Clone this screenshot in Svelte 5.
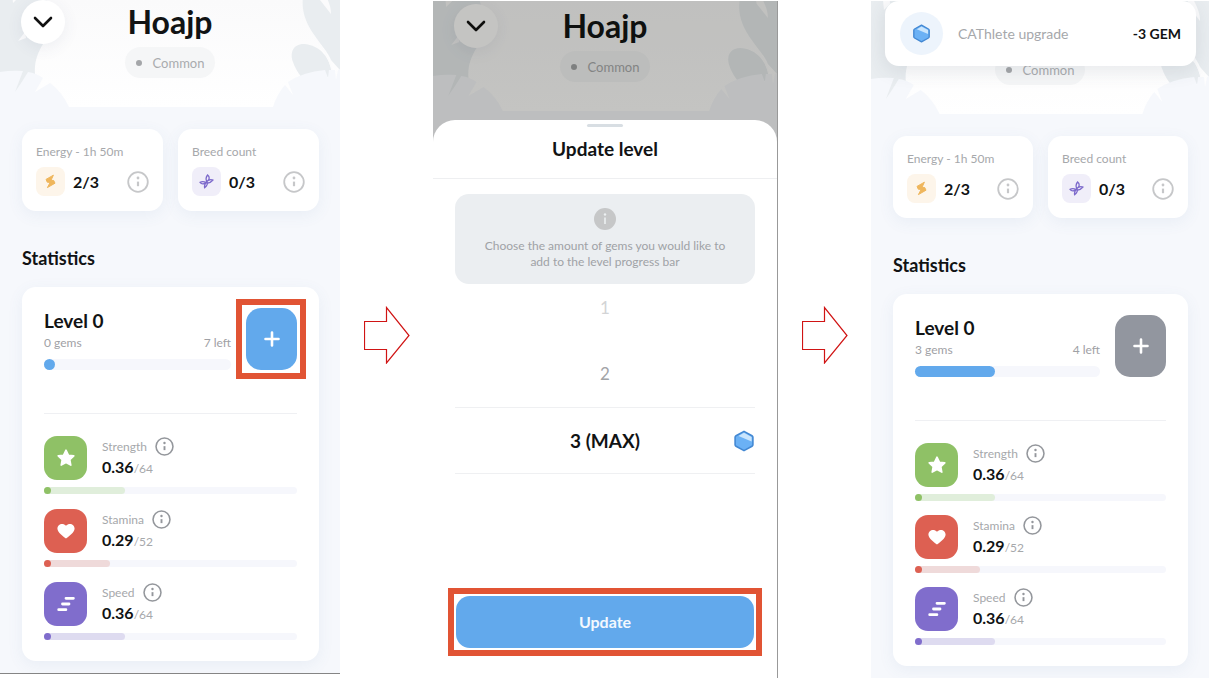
<script lang="ts">
  type Stat = {
    id: string;
    label: string;
    value: string;
    max: string;
    progress: number;
  };

  type Level = {
    gems: number;
    left: number;
    progress: number;
    disabled?: boolean;
    highlight?: boolean;
  };

  const stats: Stat[] = [
    { id: 'strength', label: 'Strength', value: '0.36', max: '64', progress: 32 },
    { id: 'stamina', label: 'Stamina', value: '0.29', max: '52', progress: 26 },
    { id: 'speed', label: 'Speed', value: '0.36', max: '64', progress: 32 },
  ];

  const before: Level = { gems: 0, left: 7, progress: 0, highlight: true };
  const after: Level = { gems: 3, left: 4, progress: 43, disabled: true };

  const amounts = [
    { value: 1, label: '1' },
    { value: 2, label: '2' },
    { value: 3, label: '3 (MAX)' },
  ];

  let amount = $state(3);
</script>

{#snippet infoIcon()}
  <svg class="icon" viewBox="0 0 22 22" aria-hidden="true">
    <circle cx="11" cy="11" r="9.8" fill="none" stroke="currentColor" stroke-width="1.8" />
    <circle cx="11" cy="7" r="1.4" fill="currentColor" />
    <path d="M11 10.6v4.6" stroke="currentColor" stroke-width="2.2" />
  </svg>
{/snippet}

{#snippet gem()}
  <svg class="icon" viewBox="0 0 22 22" aria-hidden="true">
    <path
      d="M11 1.4l8 4.4q.9.5.9 1.5v7.4q0 1-.9 1.5l-8 4.4-8-4.4q-.9-.5-.9-1.5V7.3q0-1 .9-1.5z"
      fill="#6bb1f5"
      stroke="#4388d3"
      stroke-width="1.6"
      stroke-linejoin="round"
    />
    <path d="M5.500 6l5.500-3.200L18.600 7v4.600z" fill="#c9e5fd" />
  </svg>
{/snippet}

{#snippet arrow()}
  <svg class="arrow" viewBox="0 0 46 58" aria-hidden="true">
    <path d="M.5 15.500h22V1.500L45 29.500 22.500 57V43.500H.5z" fill="#fff" stroke="#d01414" stroke-width="1.2" />
  </svg>
{/snippet}

{#snippet hero(covered: boolean)}
  <header class="hero">
    <svg class="hero__art" viewBox="0 -8 340 115" preserveAspectRatio="none" aria-hidden="true">
      <path d="M0-8h44C52 8 51 28 43 44c-5 8-9 18-8 30l-6 20H0z" fill="#e9edf0" />
      <path d="M12-8l1 11 6-6v-5zM25 32l-7 9 8-3z" fill="#fbfbfc" />
      <path d="M304-8c-4 16 1 30 11 44 6 9 13 16 16 24l9 10V-8z" fill="#e9edf0" />
      <path d="M318-8l2 8 11 14c0-8-3-14-7-22z" fill="#fbfbfc" />
      <path d="M332 76c-1-18-12-31-28-32-12 0-14 10-11 18 3 9 8 14 12 20z" fill="#e9edf0" />
      <path d="M313 36c8 10 15 19 21 41-3-15-7-27-21-41z" fill="#fbfbfc" />
      <path
        d="M0 72q12-2 23-1L15 92q7-10 13-20 8 1 15 6l-8 14 15-9q12 9 19 24H0z"
        fill="#f6f8fc"
      />
      <path
        d="M273 107q4-13 12-22l8 10-5-13q15-10 37-12l3 8 1-8h6l1 10 2-10 2-1v38z"
        fill="#f6f8fc"
      />
    </svg>
    {#if !covered}
      <div class="hero__bar">
        <button type="button" class="hero__back" aria-label="Close">
          <svg class="icon" viewBox="0 0 20 12" aria-hidden="true">
            <path
              d="M2 2l8 8 8-8"
              fill="none"
              stroke="#111"
              stroke-width="2.600"
              stroke-linecap="round"
              stroke-linejoin="round"
            />
          </svg>
        </button>
        <h1>Hoajp</h1>
      </div>
    {/if}
    <div class="chip"><span class="chip__dot"></span>Common</div>
  </header>
{/snippet}

{#snippet profile(level: Level)}
  <div class="profile">
    <div class="tiles">
      <section class="tile">
        <p class="caption">Energy - 1h 50m</p>
        <div class="tile__row">
          <span class="tile__icon tile__icon--energy">
            <svg class="icon" viewBox="0 0 15 15" aria-hidden="true">
              <path
                d="M10.400 1.200L3 5.400l1.300 2.800 2.900.2-2.800 5.200L12 9.200l-1.300-2.700-2.700-.2z"
                fill="#efb65c"
                stroke="#efb65c"
                stroke-linejoin="round"
              />
            </svg>
          </span>
          <strong>2/3</strong>
          <button type="button" class="info" aria-label="About energy">{@render infoIcon()}</button>
        </div>
      </section>
      <section class="tile">
        <p class="caption">Breed count</p>
        <div class="tile__row">
          <span class="tile__icon tile__icon--breed">
            <svg class="icon" viewBox="0 0 15 15" aria-hidden="true">
              <path
                d="M1 8.400c2.600-1.400 4.200-.8 6.200.2s4 .4 6.800-2.600M8.600 1c-1.800 2.400-2 4.400-.8 6.400s.8 4-2.200 6.400M1 8.400c1.600 2 4 1.800 5.600 0s3.600-3.800 7.400-2.400M8.600 1c2.200 1.800 2 4 .2 5.800s-4 3.400-3.200 7"
                fill="none"
                stroke="#7c69cb"
                stroke-width="1.300"
                stroke-linecap="round"
                stroke-linejoin="round"
              />
            </svg>
          </span>
          <strong>0/3</strong>
          <button type="button" class="info" aria-label="About breeding">{@render infoIcon()}</button>
        </div>
      </section>
    </div>

    <h2>Statistics</h2>

    <section class="card">
      <div class="level">
        <div class="level__main">
          <h3>Level 0</h3>
          <div class="level__meta">
            <span>{level.gems} gems</span>
            <span>{level.left} left</span>
          </div>
          <div class="bar bar--level">
            <div class="bar__fill" style="width: {level.progress}%"></div>
          </div>
        </div>
        <div class="level__action">
          <button type="button" class="add" aria-label="Add gems" disabled={level.disabled}>
            <svg class="icon" viewBox="0 0 16 16" aria-hidden="true">
              <path d="M8 1.500v13M1.500 8h13" stroke="#fff" stroke-width="2.600" stroke-linecap="round" />
            </svg>
          </button>
          {#if level.highlight}
            <span class="level__highlight"></span>
          {/if}
        </div>
      </div>

      <ul class="stats">
        {#each stats as stat (stat.id)}
          <li class="stat stat--{stat.id}">
            <div class="stat__row">
              <span class="stat__icon">
                <svg class="icon" viewBox="0 0 20 20" aria-hidden="true">
                  {#if stat.id === 'strength'}
                    <path
                      d="M10 2.200l2.400 5 5.400.7-4 3.800 1 5.400L10 14.500l-4.800 2.600 1-5.400-4-3.800 5.400-.7z"
                      fill="#fff"
                      stroke="#fff"
                      stroke-width="1.600"
                      stroke-linejoin="round"
                    />
                  {:else if stat.id === 'stamina'}
                    <path
                      d="M10 17.600C7.500 15.500 1.400 11.800 1.400 7.600c0-4.600 5.600-6.400 8.600-2.800 3-3.600 8.600-1.800 8.600 2.800 0 4.200-6.100 7.900-8.600 10z"
                      fill="#fff"
                    />
                  {:else}
                    <path
                      d="M10 4.300h7.400M6.500 10H13M2.700 15.700h7.200"
                      stroke="#fff"
                      stroke-width="2.800"
                      stroke-linecap="round"
                    />
                  {/if}
                </svg>
              </span>
              <div>
                <div class="stat__label">
                  {stat.label}
                  <button type="button" class="info info--small" aria-label="About {stat.label}">
                    {@render infoIcon()}
                  </button>
                </div>
                <div class="stat__value"><strong>{stat.value}</strong>/{stat.max}</div>
              </div>
            </div>
            <div class="bar">
              <div class="bar__potential" style="width: {stat.progress}%"></div>
              <div class="bar__fill"></div>
            </div>
          </li>
        {/each}
      </ul>
    </section>
  </div>
{/snippet}

<main class="steps">
  <section class="screen screen--start">
    {@render hero(false)}
    {@render profile(before)}
  </section>

  {@render arrow()}

  <section class="screen screen--picker">
    {@render hero(false)}
    <div class="backdrop"></div>
    <form class="sheet" onsubmit={(event) => event.preventDefault()}>
      <div class="sheet__handle"></div>
      <h2 class="sheet__title">Update level</h2>
      <div class="sheet__body">
        <div class="hint">
          <svg class="icon" viewBox="0 0 22 22" aria-hidden="true">
            <circle cx="11" cy="11" r="11" fill="#c6c7c8" />
            <circle cx="11" cy="6.500" r="1.200" fill="#edf0f2" />
            <path d="M11 9.500v6.500" stroke="#edf0f2" stroke-width="1.600" />
          </svg>
          <p>Choose the amount of gems you would like to add to the level progress bar</p>
        </div>
        <div class="wheel">
          {#each amounts as item (item.value)}
            <label class="wheel__row wheel__row--{item.value}">
              <input type="radio" name="amount" value={item.value} bind:group={amount} />
              <span>{item.label}</span>
              {#if item.value === amount}
                <span class="wheel__gem">{@render gem()}</span>
              {/if}
            </label>
          {/each}
        </div>
      </div>
      <div class="sheet__submit">
        <button type="submit">Update</button>
      </div>
    </form>
  </section>

  {@render arrow()}

  <section class="screen screen--done">
    {@render hero(true)}
    {@render profile(after)}
    <div class="toast" role="status">
      <span class="toast__icon">{@render gem()}</span>
      <span class="toast__text">CAThlete upgrade</span>
      <strong>-3 GEM</strong>
    </div>
  </section>
</main>

<style>
  :global(body) {
    margin: 0;
    background: #fff;
  }

  .steps {
    display: grid;
    grid-template-columns: 340fr 93fr 345fr 93fr 338fr 5fr;
    align-items: start;
    font-family: Lato, 'Open Sans', sans-serif;
    font-size: 13px;
    line-height: 16px;
    color: #111314;
  }

  h1,
  h2,
  h3,
  p,
  ul {
    margin: 0;
    padding: 0;
  }

  button {
    margin: 0;
    padding: 0;
    border: 0;
    background: none;
    font: inherit;
    color: inherit;
    cursor: pointer;
  }

  .icon {
    display: block;
    flex: none;
  }

  .arrow {
    width: 46px;
    align-self: center;
    justify-self: center;
    margin-bottom: 8px;
  }

  .screen {
    position: relative;
    overflow: hidden;
    background: #f6f8fc;
  }

  .screen--start {
    border-bottom: 1px solid #858585;
  }

  .screen--picker,
  .screen--done {
    margin-top: 1px;
  }

  .screen--picker {
    border-right: 1px solid #999;
  }

  /* hero */
  .hero {
    position: relative;
    display: flex;
    flex-direction: column;
    align-items: center;
    padding-bottom: 29px;
    background: linear-gradient(#fafafb, #fff);
  }

  .screen--picker .hero {
    padding-top: 3px;
  }

  .screen--done .hero {
    padding-top: 53px;
  }

  .hero__art {
    position: absolute;
    left: 0;
    bottom: 0;
    width: 100%;
    height: 115px;
  }

  .hero__bar {
    position: relative;
    display: grid;
    grid-template-columns: 44px 1fr 44px;
    align-items: center;
    box-sizing: border-box;
    width: 100%;
    margin-bottom: 3px;
    padding: 0 21px;
  }

  .hero__back {
    display: grid;
    place-items: center;
    height: 44px;
    border-radius: 50%;
    background: #fff;
    box-shadow: 0 4px 16px rgba(60, 80, 110, 0.08);
  }

  .hero__back .icon {
    width: 20px;
  }

  .hero h1 {
    font-size: 32px;
    line-height: 44px;
    text-align: center;
  }

  .chip {
    position: relative;
    display: flex;
    align-items: center;
    gap: 11px;
    height: 31px;
    padding: 0 11px;
    border-radius: 16px;
    background: #f5f6f7;
    color: #a9abae;
  }

  .chip__dot {
    width: 6px;
    height: 6px;
    border-radius: 50%;
    background: #a4a6a9;
  }

  /* profile */
  .profile {
    padding: 22px 21px 12px 22px;
  }

  .tiles {
    display: grid;
    grid-template-columns: 1fr 1fr;
    gap: 15px;
  }

  .tile,
  .card {
    background: #fff;
    box-shadow: 0 4px 16px rgba(80, 120, 160, 0.08);
  }

  .tile {
    padding: 15px 14px;
    border-radius: 14px;
  }

  .caption {
    font-size: 12px;
    color: #a6a8ab;
  }

  .tile__row {
    display: flex;
    align-items: center;
    gap: 8px;
    margin-top: 7px;
  }

  .tile__row strong {
    font-size: 16px;
  }

  .tile__icon {
    display: grid;
    place-items: center;
    width: 29px;
    height: 29px;
    border-radius: 8px;
  }

  .tile__icon .icon {
    width: 15px;
  }

  .tile__icon--energy {
    background: #fdf5ea;
  }

  .tile__icon--breed {
    background: #f0eef9;
  }

  .info {
    width: 22px;
    margin-left: auto;
    color: #c6c7c9;
  }

  .info--small {
    width: 19px;
    margin-left: 0;
    color: #94979c;
  }

  .profile h2 {
    margin: 35px 0 16px;
    font-size: 18px;
    line-height: 25px;
  }

  .card {
    padding: 21px 22px;
    border-radius: 14px;
  }

  .level {
    display: flex;
    gap: 15px;
    padding-bottom: 43px;
    border-bottom: 1px solid #eff0f3;
  }

  .level__main {
    flex: 1;
  }

  .level h3 {
    font-size: 19px;
    line-height: 25px;
  }

  .level__meta {
    display: flex;
    justify-content: space-between;
    margin: 2px 0 8px;
    font-size: 12px;
    color: #9fa1a5;
  }

  .level__action {
    position: relative;
    width: 51px;
  }

  .level__highlight {
    position: absolute;
    inset: -9px -9px -9px -10px;
    border: 6px solid #e15434;
    pointer-events: none;
  }

  .add {
    display: grid;
    place-items: center;
    width: 100%;
    height: 62px;
    border-radius: 15px;
    background: #62a9ec;
  }

  .add:disabled {
    background: #92969f;
    cursor: default;
  }

  .add .icon {
    width: 16px;
  }

  .bar {
    position: relative;
    height: 7px;
    border-radius: 6px;
    background: #f6f7fc;
  }

  .bar__fill {
    position: relative;
    width: 7px;
    height: 7px;
    border-radius: 6px;
    background: var(--stat);
  }

  .bar__potential {
    position: absolute;
    height: 7px;
    border-radius: 6px;
    background: var(--stat-soft);
  }

  .bar--level,
  .bar--level .bar__fill {
    height: 11px;
  }

  .bar--level .bar__fill {
    min-width: 11px;
    background: #62a9ec;
  }

  .stats {
    display: grid;
    gap: 15px;
    padding-top: 22px;
    list-style: none;
  }

  .screen--done .stats {
    gap: 14px;
  }

  .stat--strength {
    --stat: #8fc166;
    --stat-soft: #e0eedb;
  }

  .stat--stamina {
    --stat: #dd6052;
    --stat-soft: #efdada;
  }

  .stat--speed {
    --stat: #806dcc;
    --stat-soft: #dedbf0;
  }

  .stat__row {
    display: flex;
    align-items: center;
    gap: 15px;
    margin-bottom: 7px;
  }

  .stat__icon {
    display: grid;
    place-items: center;
    width: 43px;
    height: 44px;
    border-radius: 13px;
    background: var(--stat);
  }

  .stat__icon .icon {
    width: 20px;
  }

  .stat__label {
    display: flex;
    align-items: center;
    gap: 8px;
    font-size: 12px;
    color: #a6a8ab;
  }

  .stat__value {
    margin-top: 1px;
    font-size: 12px;
    line-height: 20px;
    color: #a6a8ab;
  }

  .stat__value strong {
    font-size: 16px;
    color: #111314;
  }

  /* level picker */
  .backdrop {
    position: absolute;
    inset: 0;
    background: rgba(8, 8, 0, 0.24);
  }

  .sheet {
    position: relative;
    margin-top: 9px;
    padding: 4px 0 22px;
    border-radius: 22px 22px 0 0;
    background: #fff;
  }

  .sheet__handle {
    width: 36px;
    height: 3px;
    margin: 0 auto;
    border-radius: 2px;
    background: #d8dee3;
  }

  .sheet__title {
    padding: 9px 0 17px;
    border-bottom: 1px solid #eeeff1;
    font-size: 19px;
    line-height: 25px;
    text-align: center;
  }

  .sheet__body {
    padding: 15px 22px 114px;
  }

  .hint {
    padding: 14px 20px;
    border-radius: 14px;
    background: #ebeef1;
    font-size: 12px;
    color: #9fa2a6;
    text-align: center;
  }

  .hint .icon {
    width: 22px;
    margin: 0 auto 8px;
  }

  .wheel {
    margin-top: -9px;
  }

  .wheel__row {
    position: relative;
    display: grid;
    place-items: center;
    height: 66px;
    font-size: 17px;
    color: #a2a4a7;
    cursor: pointer;
  }

  .wheel__row input {
    position: absolute;
    inset: 0;
    margin: 0;
    appearance: none;
    cursor: pointer;
  }

  .wheel__row--1 {
    color: #d3d4d6;
  }

  .wheel__row--3 {
    box-sizing: border-box;
    height: 67px;
    border: solid #eff0f2;
    border-width: 1px 0;
    font-size: 19px;
    font-weight: 700;
    color: #111314;
  }

  .wheel__gem {
    position: absolute;
    right: 0;
    width: 22px;
  }

  .sheet__submit {
    margin: 0 15px;
    padding: 2px;
    border: 6px solid #e15434;
  }

  .sheet__submit button {
    width: 100%;
    height: 52px;
    border-radius: 14px;
    background: #62a9ec;
    font-size: 16px;
    font-weight: 700;
    color: #f2f8fe;
  }

  /* toast */
  .toast {
    position: absolute;
    top: 0;
    left: 14px;
    right: 13px;
    display: flex;
    align-items: center;
    padding: 11px 15px;
    border-radius: 14px;
    background: #fff;
    box-shadow: 0 4px 20px rgba(60, 70, 90, 0.12);
    font-size: 14px;
  }

  .toast__icon {
    display: grid;
    place-items: center;
    width: 43px;
    height: 43px;
    border-radius: 50%;
    background: #edf4fc;
  }

  .toast__icon .icon {
    width: 19px;
  }

  .toast__text {
    flex: 1;
    margin-left: 15px;
    color: #a6a8ab;
  }
</style>
